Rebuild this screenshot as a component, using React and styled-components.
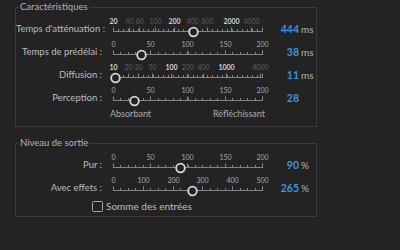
import React from "react";
import styled, { createGlobalStyle } from "styled-components";

const GlobalStyle = createGlobalStyle`
  html, body { margin: 0; padding: 0; background: #232323; }
  body {
    width: 400px;
    height: 250px;
    overflow: hidden;
    font-family: Lato, "Open Sans", "Liberation Sans", sans-serif;
  }
`;

const Page = styled.div`
  padding-left: 15px;
`;

const Group = styled.fieldset`
  box-sizing: border-box;
  width: 302px;
  min-inline-size: 0;
  margin: 0 0 ${(p) => p.$gap || 0}px 0;
  padding: 3px 0 ${(p) => p.$padBottom}px 0;
  border: 1px solid #3a3a3a;
`;

const Title = styled.legend`
  margin-left: 2px;
  padding: 0 2px;
  font-size: 9.5px;
  line-height: 14px;
  color: #b4b4b4;
`;

const Row = styled.div`
  display: grid;
  grid-template-columns: 92px 160px 31px auto;
  align-items: center;
  height: 23px;
`;

const Label = styled.div`
  text-align: right;
  padding-right: 6px;
  font-size: 9.5px;
  color: #bdbdbd;
  white-space: nowrap;
`;

const Value = styled.div`
  text-align: right;
  font-size: 10.5px;
  font-weight: 700;
  color: #3a94df;
`;

const Unit = styled.div`
  padding-left: 2px;
  font-size: 10px;
  color: #b4b4b4;
`;

const SliderBox = styled.div`
  display: flex;
  flex-direction: column;
  height: 23px;
`;

const ScaleLabels = styled.div`
  position: relative;
  height: 9px;
`;

const tones = {
  bright: { c: "#d2d2d2", w: 700 },
  normal: { c: "#a8a8a8", w: 400 },
  dim: { c: "#5e5e5e", w: 400 },
};

const ScaleLabel = styled.span`
  position: absolute;
  top: 0;
  transform: translateX(-50%);
  font-size: 7px;
  line-height: 9px;
  white-space: nowrap;
  color: ${(p) => tones[p.$tone].c};
  font-weight: ${(p) => tones[p.$tone].w};
`;

const Track = styled.svg`
  display: block;
  overflow: visible;
`;

const PoleRow = styled.div`
  display: grid;
  grid-template-columns: 92px 160px;
  height: 10px;
`;

const Poles = styled.div`
  grid-column: 2;
  display: flex;
  justify-content: space-between;
  padding: 0 3px 0 2px;
  font-size: 9px;
  line-height: 10px;
  color: #acacac;
`;

const CheckRow = styled.label`
  display: flex;
  align-items: center;
  gap: 3px;
  height: 14px;
  margin-left: 76px;
  font-size: 10px;
  color: #bdbdbd;
`;

const Box = styled.span`
  box-sizing: border-box;
  width: 11px;
  height: 11px;
  border: 1.5px solid #a8a8a8;
  border-radius: 1.5px;
`;

const RANGE = 149;
const OFF = 5;

function Slider({ labels, thumb, minorStep }) {
  const minors = [];
  for (let x = 0; x <= RANGE + 0.01; x += minorStep) minors.push(Math.round(x));
  const majors = labels.map((l) => l.x);
  return (
    <SliderBox>
      <ScaleLabels>
        {labels.map((l) => (
          <ScaleLabel key={l.t} $tone={l.tone} style={{ left: OFF + l.x + 0.5 }}>
            {l.t}
          </ScaleLabel>
        ))}
      </ScaleLabels>
      <Track width="160" height="14" viewBox="0 0 160 14">
        <line x1={OFF} x2={OFF + RANGE + 1} y1="5.5" y2="5.5" stroke="#858585" strokeWidth="1" />
        {minors.map((x, i) => (
          <line key={"m" + i} x1={OFF + x + 0.5} x2={OFF + x + 0.5} y1="3" y2="5.5" stroke="#858585" strokeWidth="1" />
        ))}
        {majors.map((x, i) => (
          <line key={"M" + i} x1={OFF + x + 0.5} x2={OFF + x + 0.5} y1="1.5" y2="5.5" stroke="#858585" strokeWidth="1" />
        ))}
        <line x1={OFF + RANGE + 0.5} x2={OFF + RANGE + 0.5} y1="1.5" y2="5.5" stroke="#858585" strokeWidth="1" />
        <circle cx={OFF + thumb + 0.5} cy="6" r="4.3" fill="#232323" stroke="#d8d8d8" strokeWidth="1.8" />
      </Track>
    </SliderBox>
  );
}

const lin200 = [
  { t: "0", x: 0, tone: "normal" },
  { t: "50", x: 37, tone: "normal" },
  { t: "100", x: 74, tone: "normal" },
  { t: "150", x: 112, tone: "normal" },
  { t: "200", x: 149, tone: "normal" },
];

const group1 = [
  {
    label: "Temps d'atténuation :",
    labels: [
      { t: "20", x: 0, tone: "bright" },
      { t: "40", x: 16, tone: "dim" },
      { t: "60", x: 26, tone: "dim" },
      { t: "100", x: 42, tone: "dim" },
      { t: "200", x: 61, tone: "bright" },
      { t: "400", x: 79, tone: "dim" },
      { t: "800", x: 94, tone: "dim" },
      { t: "2000", x: 118, tone: "bright" },
      { t: "4000", x: 138, tone: "dim" },
    ],
    thumb: 80,
    minorStep: 4.97,
    value: "444",
    unit: "ms",
  },
  { label: "Temps de prédélai :", labels: lin200, thumb: 28, minorStep: 7.45, value: "38", unit: "ms" },
  {
    label: "Diffusion :",
    labels: [
      { t: "10", x: 0, tone: "bright" },
      { t: "20", x: 15, tone: "dim" },
      { t: "30", x: 25, tone: "dim" },
      { t: "50", x: 39, tone: "dim" },
      { t: "100", x: 58, tone: "bright" },
      { t: "200", x: 74, tone: "dim" },
      { t: "400", x: 90, tone: "dim" },
      { t: "1000", x: 113, tone: "bright" },
      { t: "4000", x: 147, tone: "dim" },
    ],
    thumb: 2,
    minorStep: 4.97,
    value: "11",
    unit: "ms",
  },
  { label: "Perception :", labels: lin200, thumb: 21, minorStep: 7.45, value: "28", unit: "" },
];

const group2 = [
  { label: "Pur :", labels: lin200, thumb: 67, minorStep: 7.45, value: "90", unit: "%" },
  {
    label: "Avec effets :",
    labels: [
      { t: "0", x: 0, tone: "normal" },
      { t: "100", x: 30, tone: "normal" },
      { t: "200", x: 60, tone: "normal" },
      { t: "300", x: 89, tone: "normal" },
      { t: "400", x: 119, tone: "normal" },
      { t: "500", x: 149, tone: "normal" },
    ],
    thumb: 79,
    minorStep: 7.45,
    value: "265",
    unit: "%",
  },
];

function SliderRow({ d }) {
  return (
    <Row>
      <Label>{d.label}</Label>
      <Slider labels={d.labels} thumb={d.thumb} minorStep={d.minorStep} />
      <Value>{d.value}</Value>
      <Unit>{d.unit}</Unit>
    </Row>
  );
}

export default function App() {
  return (
    <>
      <GlobalStyle />
      <Page>
        <Group $padBottom={7} $gap={9}>
          <Title>Caractéristiques</Title>
          {group1.map((d) => (
            <SliderRow key={d.label} d={d} />
          ))}
          <PoleRow>
            <Poles>
              <span>Absorbant</span>
              <span>Réfléchissant</span>
            </Poles>
          </PoleRow>
        </Group>
        <Group $padBottom={3}>
          <Title>Niveau de sortie</Title>
          {group2.map((d) => (
            <SliderRow key={d.label} d={d} />
          ))}
          <CheckRow>
            <Box />
            <span>Somme des entrées</span>
          </CheckRow>
        </Group>
      </Page>
    </>
  );
}
